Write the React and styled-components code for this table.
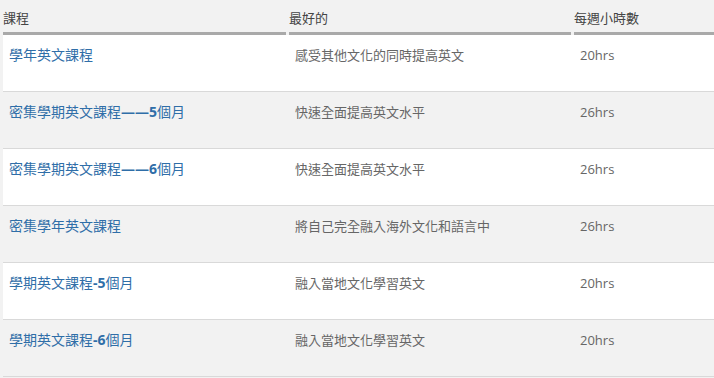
import React from "react";
import styled, { createGlobalStyle } from "styled-components";

const COURSES = [
  { name: ["學年英文課程"], best: "感受其他文化的同時提高英文", hours: "20hrs" },
  { name: ["密集學期英文課程", "——5", "個月"], best: "快速全面提高英文水平", hours: "26hrs" },
  { name: ["密集學期英文課程", "——6", "個月"], best: "快速全面提高英文水平", hours: "26hrs" },
  { name: ["密集學年英文課程"], best: "將自己完全融入海外文化和語言中", hours: "26hrs" },
  { name: ["學期英文課程", "-5", "個月"], best: "融入當地文化學習英文", hours: "20hrs" },
  { name: ["學期英文課程", "-6", "個月"], best: "融入當地文化學習英文", hours: "20hrs" },
];

const GlobalStyle = createGlobalStyle`
  html, body {
    margin: 0;
    background: #f2f2f2;
    font-family: "Open Sans", "Noto Sans CJK TC", sans-serif;
    overflow: hidden;
  }
`;

function App() {
  return (
    <>
      <GlobalStyle />
      <Wrapper>
        <CourseTable>
          <colgroup>
            <col style={{ width: 286 }} />
            <col style={{ width: 285 }} />
            <col />
          </colgroup>
          <thead>
            <tr>
              <HeadCell>
                <HeadLabel>課程</HeadLabel>
              </HeadCell>
              <HeadCell>
                <HeadLabel>最好的</HeadLabel>
              </HeadCell>
              <HeadCell $last>
                <HeadLabel>每週小時數</HeadLabel>
              </HeadCell>
            </tr>
          </thead>
          <tbody>
            {COURSES.map((course, i) => (
              <Row key={`course-${i}`} $odd={i % 2 === 1}>
                <Cell>
                  <CourseLink href="#">
                    {course.name.map((part, j) =>
                      j === 1 ? <Latin key={j}>{part}</Latin> : <span key={j}>{part}</span>
                    )}
                  </CourseLink>
                </Cell>
                <Cell>{course.best}</Cell>
                <Cell>{course.hours}</Cell>
              </Row>
            ))}
          </tbody>
        </CourseTable>
      </Wrapper>
    </>
  );
}

const Wrapper = styled.div`
  padding-left: 3px;
`;

const CourseTable = styled.table`
  width: 720px;
  table-layout: fixed;
  border-collapse: collapse;
`;

const HeadCell = styled.th`
  padding: 0 ${(p) => (p.$last ? "0" : "3px")} 0 0;
  text-align: left;
  vertical-align: bottom;
`;

const HeadLabel = styled.div`
  padding: 8px 0 4px;
  font-size: 13px;
  line-height: 20px;
  font-weight: 400;
  color: #444;
  border-bottom: 3px solid #a9a9a9;
`;

const Row = styled.tr`
  background: ${(p) => (p.$odd ? "#f2f2f2" : "#ffffff")};
  border-bottom: 1px solid #d9d9d9;
`;

const Cell = styled.td`
  height: 20px;
  padding: 10px 6px 26px;
  font-size: 13px;
  line-height: 20px;
  color: #666;
  vertical-align: top;
  white-space: nowrap;
`;

const CourseLink = styled.a`
  font-size: 14px;
  color: #2f6ea8;
  text-decoration: none;
`;

const Latin = styled.span`
  font-weight: 700;
`;

export default App;
